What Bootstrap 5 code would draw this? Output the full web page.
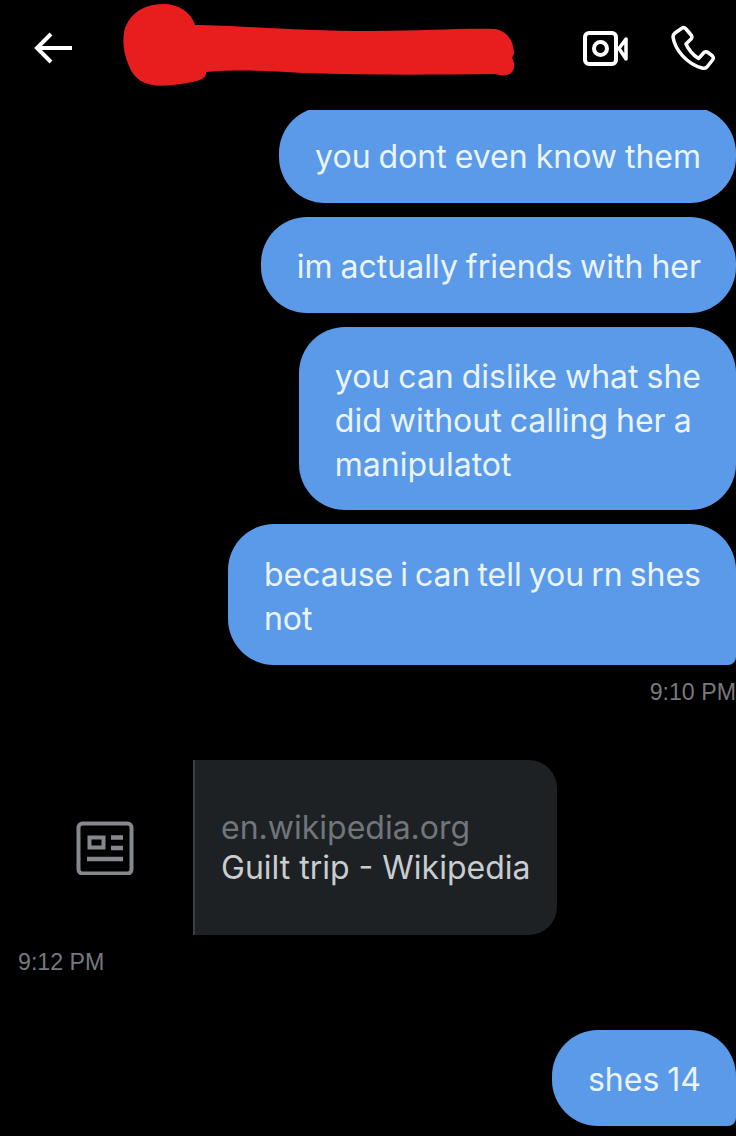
<!DOCTYPE html>
<html>
<head>
  <title>Messages</title>
  <meta charset="UTF-8">
  <link href="https://cdn.jsdelivr.net/npm/bootstrap@5.3.2/dist/css/bootstrap.min.css" rel="stylesheet">
  <style>
    body {
      background-color: #000;
      font-family: Inter, "Noto Sans", sans-serif;
      overflow: hidden;
    }
    .chat-head {
      height: 110px;
      padding-left: 34px;
      padding-right: 21px;
      padding-bottom: 14px;
    }
    .back-icon { margin-right: 51px; }
    .scribble { margin-top: -6px; margin-right: 69px; }
    .video-icon { margin-right: 43px; }
    .thread {
      height: 1026px;
      overflow: hidden;
    }
    .bubble {
      background-color: #5a9ae8;
      color: #eaf4fd;
      font-size: 32px;
      word-spacing: -1px;
      line-height: 44px;
      padding: 28px 35px 24px 36px;
      border-radius: 46px;
      margin-bottom: 14px;
    }
    .bubble-first { margin-top: -3px; }
    .bubble-wide { padding-bottom: 23px; }
    .bubble-tail { border-bottom-right-radius: 8px; }
    .bubble-note { padding-top: 29px; word-spacing: -2px; }
    .stamp {
      color: #76797e;
      font-family: "Liberation Sans", sans-serif;
      font-size: 23.2px;
      line-height: 30px;
    }
    .stamp-out { margin-top: 12px; }
    .link-row { margin-top: 53px; }
    .link-thumb { width: 193px; height: 175px; padding-right: 59px; }
    .link-body {
      width: 364px;
      height: 175px;
      background-color: #1e2124;
      border-left: 2px solid #3c4044;
      border-radius: 0 28px 28px 0;
      padding-left: 26px;
      font-size: 32px;
      line-height: 40px;
    }
    .link-site { color: #71767b; }
    .link-title { color: #c9cdd0; }
    .stamp-in { margin-top: 12px; padding-left: 18px; margin-bottom: 53px; }
  </style>
</head>
<body>

<div class="chat-head d-flex align-items-center">
  <svg class="back-icon flex-shrink-0" width="38" height="32" viewBox="0 0 38 32" fill="none" stroke="#fff" stroke-width="4"><path d="M38 16H3M17 2 3 16l14 14"/></svg>
  <svg class="scribble flex-shrink-0" width="391" height="82" viewBox="0 0 391 82"><path fill="#e81e1e" d="M40 0C56 0 68 8 72 21C110 21 170 27 250 27C300 27 340 24 372 25C385 27 391 38 391 50L389 54C392 58 392 66 388 69C384 72 378 72 372 70C300 71 240 71 180 69C140 66 110 66 83 68C84 76 72 78 50 81C26 84 12 78 6 62C0 48 -1 36 2 24C8 8 22 0 40 0Z"/></svg>
  <svg class="video-icon flex-shrink-0" width="45" height="35" viewBox="0 0 45 35" fill="none" stroke="#fff" stroke-width="4" stroke-linejoin="round"><rect x="2" y="2" width="31" height="31" rx="4"/><circle cx="17.500" cy="17.500" r="6.500"/><path d="M36 17.500 43 8V28Z" stroke-width="3.500"/></svg>
  <svg class="flex-shrink-0" width="44" height="46" viewBox="0 0 44 46" fill="none" stroke="#fff" stroke-width="3.500" stroke-linejoin="round"><path d="M10.500 3.500Q13 1.500 15 4L20.500 10.500Q21.500 12.500 20 14L15 19Q19 28 27.500 33.500L33 27.500Q35 26 37 27.500L41.500 31Q43 33 41.500 35L36 42Q34 44 31 43C16 39 4 25 2 12Q2 9.500 4 8Z"/></svg>
</div>

<div class="thread">
  <div class="d-flex flex-column align-items-end">
    <div class="bubble bubble-first">you dont even know them</div>
    <div class="bubble">im actually friends with her</div>
    <div class="bubble bubble-wide">you can dislike what she<br>did without calling her a<br>manipulatot</div>
    <div class="bubble bubble-tail bubble-note mb-0">because i can tell you rn shes<br>not</div>
    <div class="stamp stamp-out">9:10 PM</div>
  </div>

  <div class="link-row d-flex">
    <div class="link-thumb d-flex align-items-center justify-content-end flex-shrink-0">
      <svg width="58" height="54" viewBox="0 0 58 54" fill="none" stroke="#85888c" stroke-width="4"><rect x="2.500" y="2.500" width="53" height="50" rx="4"/><rect x="13.500" y="16.500" width="14" height="10"/><path d="M35 16.500H47M35 27H47M11 38H47" stroke-width="4.500"/></svg>
    </div>
    <div class="link-body d-flex flex-column justify-content-center flex-shrink-0">
      <div class="link-site">en.wikipedia.org</div>
      <div class="link-title">Guilt trip - Wikipedia</div>
    </div>
  </div>
  <div class="stamp stamp-in">9:12 PM</div>

  <div class="d-flex justify-content-end">
    <div class="bubble bubble-tail">shes 14</div>
  </div>
</div>

<script src="https://cdn.jsdelivr.net/npm/bootstrap@5.3.2/dist/js/bootstrap.bundle.min.js"></script>
</body>
</html>
